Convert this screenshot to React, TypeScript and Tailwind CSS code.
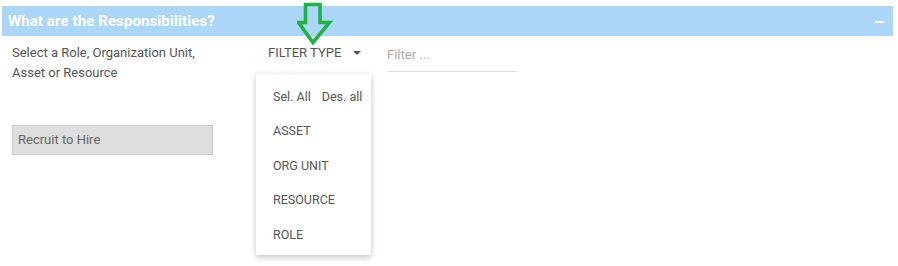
import React from "react";

const menuItems = ["ASSET", "ORG UNIT", "RESOURCE", "ROLE"];

function GreenArrow() {
  return (
    <svg
      className="absolute left-[297px] top-[2px]"
      width="36"
      height="44"
      viewBox="0 0 36 44"
    >
      <path
        d="M8.5 2.5 H23 V20.5 H32.5 L16 40.5 L1.5 20.5 H8.5 Z"
        fill="none"
        stroke="#1fb145"
        strokeWidth="3.6"
        strokeLinejoin="miter"
      />
    </svg>
  );
}

export default function App() {
  return (
    <div className="relative w-[898px] h-[266px] bg-white font-['Roboto',sans-serif] overflow-hidden">
      <div className="pt-[6px] px-[2px] pr-[5px]">
        <div className="h-[30px] bg-[#abd6f7] flex items-center justify-between pl-[6px] pr-[9px]">
          <span className="text-white font-bold text-[15px] tracking-[0.1px]">
            What are the Responsibilities?
          </span>
          <span className="block w-[9px] h-[1.5px] bg-white mt-[2px]" />
        </div>
      </div>

      <div className="flex pl-[12px] pt-[7px]">
        <div className="w-[244px]">
          <p className="text-[13px] leading-[20px] text-[#555] w-[200px]">
            Select a Role, Organization Unit, Asset or Resource
          </p>
          <div className="mt-[42px] w-[201px] h-[30px] bg-[#dedede] border border-[#cbcbcb] flex items-center pl-[5px] text-[13px] text-[#666]">
            Recruit to Hire
          </div>
        </div>

        <div className="relative w-[131px]">
          <div className="flex items-center h-[20px] pl-[12px] text-[13px] text-[#555]">
            <span>FILTER TYPE</span>
            <svg className="ml-[12px]" width="8" height="4" viewBox="0 0 8 4">
              <path d="M0 0 H8 L4 4 Z" fill="#555" />
            </svg>
          </div>
          <div className="absolute left-0 top-[31px] w-[115px] h-[181px] bg-white shadow-[0_2px_6px_rgba(0,0,0,0.25)] text-[12.5px] text-[#555] pl-[17px] pt-[16px]">
            <div className="flex gap-[11px] h-[14px] items-center">
              <span>Sel. All</span>
              <span>Des. all</span>
            </div>
            {menuItems.map((item) => (
              <div key={item} className="h-[14px] mt-[20.5px] flex items-center">
                {item}
              </div>
            ))}
          </div>
        </div>

        <div className="w-[131px] h-[29px] border-b border-[#e0e0e0] flex items-start pt-[2px] text-[13px] text-[#aaa]">
          Filter ...
        </div>
      </div>

      <GreenArrow />
    </div>
  );
}
